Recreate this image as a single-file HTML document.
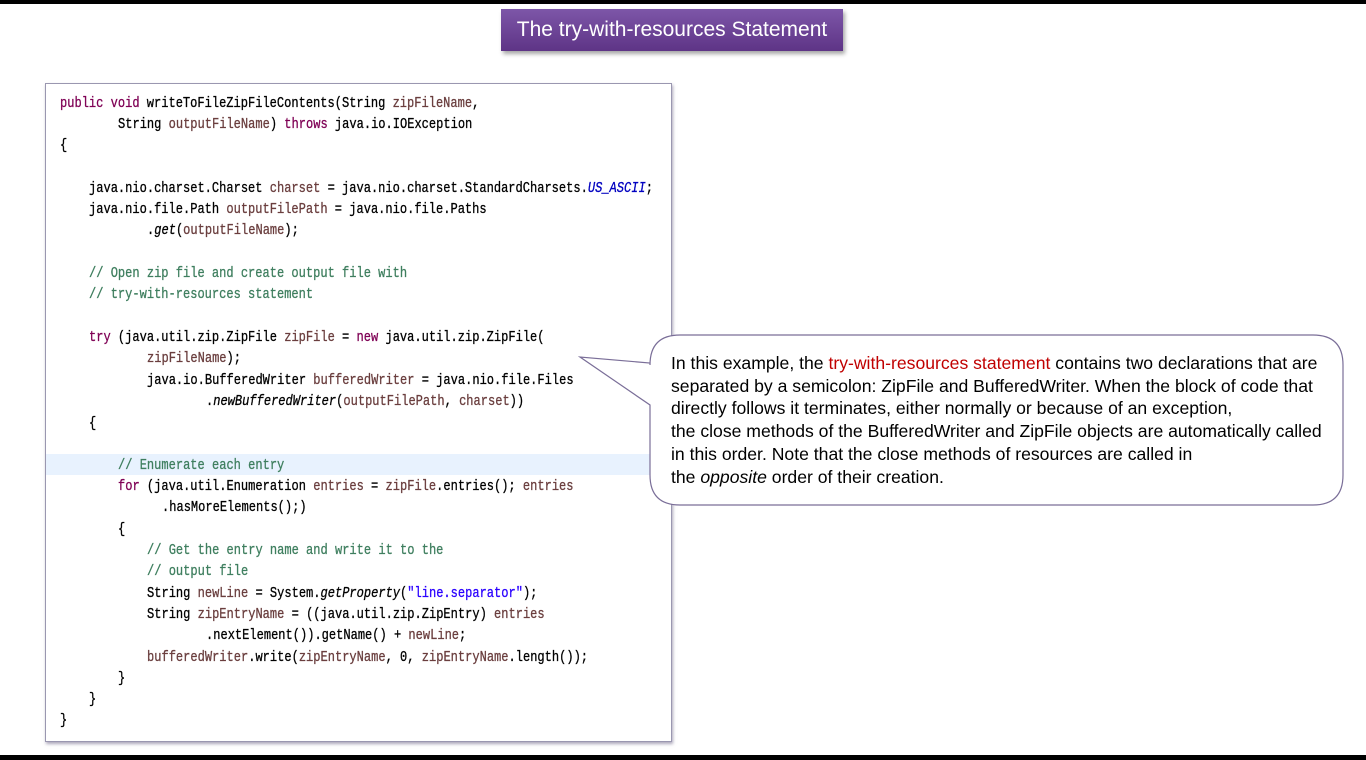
<!DOCTYPE html>
<html><head><meta charset="utf-8"><style>
body{margin:0;width:1366px;height:760px;background:#fff;position:relative;overflow:hidden;font-family:"Liberation Sans",sans-serif}
.bar{position:absolute;left:0;width:1366px;background:#000}
.title{position:absolute;left:501px;top:9px;width:342px;height:42px;background:linear-gradient(#7d56a8,#5e3486);color:#fff;font-size:21px;line-height:42px;text-align:center;box-shadow:2px 3px 4px rgba(0,0,0,.35)}
.code{position:absolute;left:45px;top:83px;width:625px;height:657px;border:1px solid #9a97b0;box-shadow:1px 2px 3px rgba(90,80,120,.5);background:#fff}
.hl{position:absolute;left:46px;top:454px;width:610px;height:21px;background:#e8f2fe}
.l{position:absolute;font-family:"Liberation Mono",monospace;font-size:12.05px;white-space:pre;color:#000;line-height:16px;transform:scaleY(1.25);transform-origin:0 50%;-webkit-text-stroke:0.25px currentColor}
.k{color:#7f0055}
.v{color:#6a3e3e}
.c{color:#3f7f5f}
.s{color:#2a00ff}
.b{color:#0000c0;font-style:italic}
i{font-style:italic}
.t{position:absolute;left:671px;font-size:17.6px;white-space:nowrap;color:#000;line-height:20px}
.r{color:#c00000}
</style></head><body>
<div class="bar" style="top:0;height:4px"></div>
<div class="bar" style="top:755px;height:5px"></div>
<div class="title">The try-with-resources Statement</div>
<div class="code"></div>
<div class="hl"></div>
<div class="l" style="left:60px;top:95px"><span class="k">public</span> <span class="k">void</span> writeToFileZipFileContents(String <span class="v">zipFileName</span>,</div>
<div class="l" style="left:118px;top:116px">String <span class="v">outputFileName</span>) <span class="k">throws</span> java.io.IOException</div>
<div class="l" style="left:60px;top:137px">{</div>
<div class="l" style="left:89px;top:180px">java.nio.charset.Charset <span class="v">charset</span> = java.nio.charset.StandardCharsets.<span class="b">US_ASCII</span>;</div>
<div class="l" style="left:89px;top:201px">java.nio.file.Path <span class="v">outputFilePath</span> = java.nio.file.Paths</div>
<div class="l" style="left:147px;top:222px">.<i>get</i>(<span class="v">outputFileName</span>);</div>
<div class="l c" style="left:89px;top:265px">// Open zip file and create output file with</div>
<div class="l c" style="left:89px;top:286px">// try-with-resources statement</div>
<div class="l" style="left:89px;top:329px"><span class="k">try</span> (java.util.zip.ZipFile <span class="v">zipFile</span> = <span class="k">new</span> java.util.zip.ZipFile(</div>
<div class="l" style="left:147px;top:350px"><span class="v">zipFileName</span>);</div>
<div class="l" style="left:147px;top:372px">java.io.BufferedWriter <span class="v">bufferedWriter</span> = java.nio.file.Files</div>
<div class="l" style="left:206px;top:393px">.<i>newBufferedWriter</i>(<span class="v">outputFilePath</span>, <span class="v">charset</span>))</div>
<div class="l" style="left:89px;top:415px">{</div>
<div class="l c" style="left:118px;top:457px">// Enumerate each entry</div>
<div class="l" style="left:118px;top:478px"><span class="k">for</span> (java.util.Enumeration <span class="v">entries</span> = <span class="v">zipFile</span>.entries(); <span class="v">entries</span></div>
<div class="l" style="left:162px;top:499px">.hasMoreElements();)</div>
<div class="l" style="left:118px;top:521px">{</div>
<div class="l c" style="left:147px;top:542px">// Get the entry name and write it to the</div>
<div class="l c" style="left:147px;top:563px">// output file</div>
<div class="l" style="left:147px;top:585px">String <span class="v">newLine</span> = System.<i>getProperty</i>(<span class="s">"line.separator"</span>);</div>
<div class="l" style="left:147px;top:606px">String <span class="v">zipEntryName</span> = ((java.util.zip.ZipEntry) <span class="v">entries</span></div>
<div class="l" style="left:206px;top:627px">.nextElement()).getName() + <span class="v">newLine</span>;</div>
<div class="l" style="left:147px;top:649px"><span class="v">bufferedWriter</span>.write(<span class="v">zipEntryName</span>, 0, <span class="v">zipEntryName</span>.length());</div>
<div class="l" style="left:118px;top:670px">}</div>
<div class="l" style="left:89px;top:691px">}</div>
<div class="l" style="left:60px;top:712px">}</div>
<svg style="position:absolute;left:0;top:0" width="1366" height="760">
<path d="M680 335 H1313 Q1343 335 1343 365 V475 Q1343 505 1313 505 H680 Q650 505 650 475 V405 L580 357 L650 363 V365 Q650 335 680 335 Z" fill="#fff" stroke="#7a6e98" stroke-width="1.2"/>
</svg>
<div class="t" style="top:353px">In this example, the <span class="r">try-with-resources statement</span> contains two declarations that are</div>
<div class="t" style="top:376px">separated by a semicolon: ZipFile and BufferedWriter. When the block of code that</div>
<div class="t" style="top:398px">directly follows it terminates, either normally or because of an exception,</div>
<div class="t" style="top:421px">the close methods of the BufferedWriter and ZipFile objects are automatically called</div>
<div class="t" style="top:444px">in this order. Note that the close methods of resources are called in</div>
<div class="t" style="top:467px">the <i>opposite</i> order of their creation.</div>
</body></html>
